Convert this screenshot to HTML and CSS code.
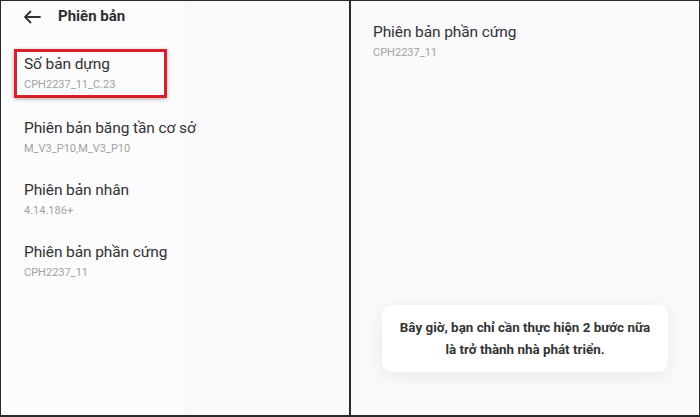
FILE: index.html
```html
<!DOCTYPE html>
<html lang="vi">
<head>
<meta charset="utf-8">
<title>Phiên bản</title>
<link rel="stylesheet" href="styles.css">
</head>
<body>
<div class="frame">
  <section class="panel panel-left">
    <header class="topbar">
      <svg class="back" width="18" height="14" viewBox="0 0 18 14" aria-hidden="true">
        <path d="M17 7H2M7.5 1.5L2 7l5.5 5.5" fill="none" stroke="#333" stroke-width="1.8" stroke-linecap="round" stroke-linejoin="round"/>
      </svg>
      <h1 class="page-title">Phiên bản</h1>
    </header>
    <div class="list">
      <div class="item highlight">
        <div class="item-title">Số bản dựng</div>
        <div class="item-sub">CPH2237_11_C.23</div>
      </div>
      <div class="item">
        <div class="item-title">Phiên bản băng tần cơ sở</div>
        <div class="item-sub">M_V3_P10,M_V3_P10</div>
      </div>
      <div class="item">
        <div class="item-title">Phiên bản nhân</div>
        <div class="item-sub">4.14.186+</div>
      </div>
      <div class="item">
        <div class="item-title">Phiên bản phần cứng</div>
        <div class="item-sub">CPH2237_11</div>
      </div>
    </div>
  </section>
  <div class="divider"></div>
  <section class="panel panel-right">
    <div class="item right-item">
      <div class="item-title">Phiên bản phần cứng</div>
      <div class="item-sub">CPH2237_11</div>
    </div>
    <div class="toast">Bây giờ, bạn chỉ cần thực hiện 2 bước nữa<br>là trở thành nhà phát triển.</div>
  </section>
</div>
</body>
</html>
```

FILE: styles.css
```css
* { box-sizing: border-box; }
html, body { margin: 0; padding: 0; }
body {
  width: 700px;
  height: 417px;
  font-family: Roboto, "Noto Sans", "DejaVu Sans", sans-serif;
  background: #2a2a2a;
  overflow: hidden;
}
.frame {
  display: flex;
  width: 700px;
  height: 417px;
  border: 1px solid #2a2a2a;
  border-bottom-width: 2px;
  background: #2a2a2a;
}
.panel {
  width: 348px;
  height: 100%;
  display: flex;
  flex-direction: column;
}
.panel-left {
  background: linear-gradient(90deg, #fcfbfd 0%, #fcfbfd 52%, #f9f8fb 54%, #f9f8fb 100%);
}
.panel-right {
  background: #faf9fb;
  align-items: flex-start;
}
.divider {
  width: 2px;
  background: #2a2a2a;
}
.topbar {
  height: 30px;
  display: flex;
  align-items: center;
  padding-left: 22px;
  gap: 17px;
}
.back { display: block; margin-top: 1px; }
.page-title {
  margin: 0;
  font-size: 15px;
  font-weight: 700;
  color: #2e2e2e;
  line-height: 20px;
}
.list {
  display: flex;
  flex-direction: column;
  padding-top: 18px;
}
.item {
  padding-left: 23px;
  margin-bottom: 24px;
}
.item-title {
  font-size: 15.5px;
  line-height: 20px;
  color: #333;
  letter-spacing: -0.1px;
}
.item-sub {
  margin-top: 4px;
  font-size: 11px;
  line-height: 14px;
  color: #a2a2a2;
}
.highlight {
  align-self: flex-start;
  width: 153px;
  margin-left: 13px;
  padding: 2px 9px 3px 7px;
  border: 3px solid #d7202b;
  box-shadow: 0 1px 4px rgba(80, 0, 0, 0.35);
  margin-bottom: 20px;
}
.right-item {
  padding-top: 21px;
  padding-left: 22px;
}
.toast {
  margin: auto 0 43px 31px;
  width: 286px;
  height: 67px;
  padding-top: 12px;
  background: #ffffff;
  border-radius: 10px;
  box-shadow: 0 4px 18px rgba(0, 0, 0, 0.08);
  text-align: center;
  font-size: 13.4px;
  font-weight: 700;
  line-height: 22px;
  color: #333;
}
```
